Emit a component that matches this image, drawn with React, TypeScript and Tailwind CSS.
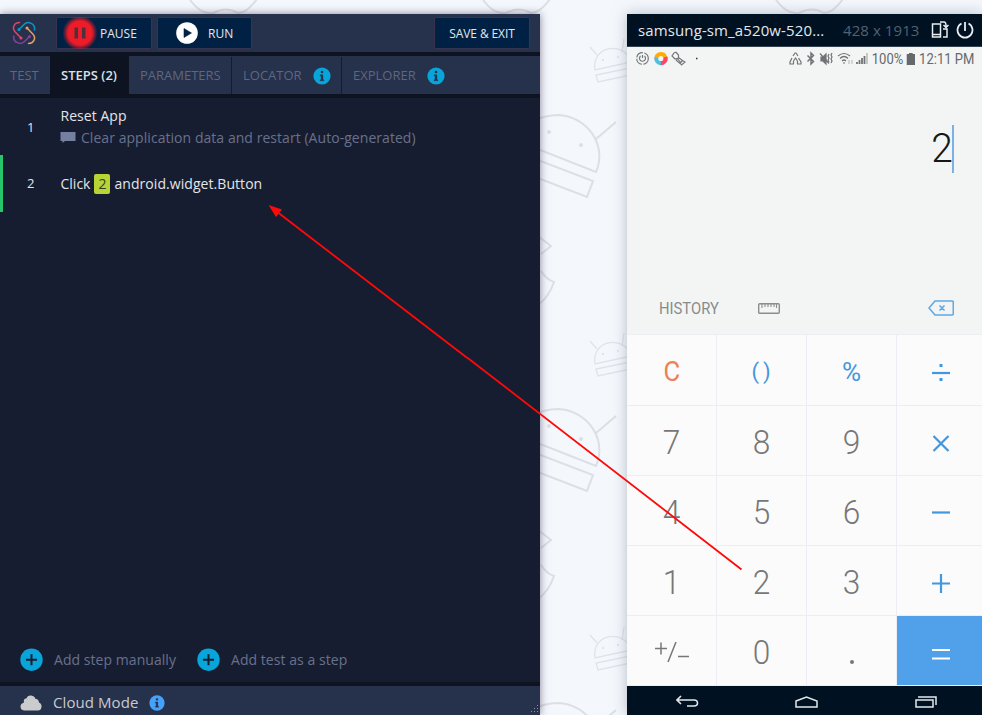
import type { ReactNode } from "react";

function Backdrop() {
  return (
    <svg className="absolute inset-0" width="982" height="715" fill="none" stroke="#dcdfe3" strokeWidth="2">
      <defs>
        <g id="robots">
          <path d="M530 122Q545 115 558 115C586 116 608 144 596 172L530 146M530 157L593 181L587 197L530 175M596 139L616 122" />
          <circle cx="549" cy="132" r="1" />
          <circle cx="581" cy="145" r="1" />
          <path d="M530 230L551 246L541 254M541 271Q547 280 554 282Q549 297 538 305" />
          <g strokeWidth="1.3" stroke="#e0e3e9">
            <path d="M640 60L595 70C591 46 623 41 630 60M640 66L596 75L598 82L640 73M590 47L597 55M622 52L624 39" />
            <circle cx="603" cy="60" r=".5" />
            <circle cx="618" cy="57" r=".5" />
          </g>
        </g>
        <path id="curve" d="M190 0Q201 15 213 13Q226 6 238 13Q247 13 257 -1" />
      </defs>
      <use href="#robots" />
      <use href="#robots" y="294" />
      <use href="#robots" y="588" />
      <use href="#curve" />
      <use href="#curve" x="293" />
      <use href="#curve" x="586" />
    </svg>
  );
}

function Info({ className }: { className: string }) {
  return (
    <svg viewBox="0 0 18 18" className={className}>
      <circle cx="9" cy="9" r="8.6" fill="currentColor" />
      <path d="M7 7.8h3v5h1v1H7v-1h1V9H7zM8 4h2v2H8z" fill="#26314b" stroke="#26314b" strokeWidth=".3" />
    </svg>
  );
}

function Plus() {
  return (
    <svg viewBox="0 0 24 24" className="size-6 shrink-0">
      <circle cx="11.500" cy="11.700" r="11.200" fill="#07a5da" />
      <path d="M11.500 6.200v11M6 11.700h11" stroke="#171d30" strokeWidth="2" />
    </svg>
  );
}

function Logo() {
  return (
    <svg viewBox="0 0 24 24" className="ml-[12px] size-6 shrink-0" fill="none" strokeWidth="1.5" strokeLinecap="round">
      <path d="M9 17L3 10.800C-.2 7 2 1.500 7.500 1.500" stroke="#e6436c" />
      <path d="M7 8.500L12 3.500C16-.5 23.500 2.500 22.500 9" stroke="#0997cb" />
      <path d="M15 7L21 13.200C24.500 17.200 21.500 22.500 16.500 22.500" stroke="#e0a067" />
      <path d="M17.500 15.500L12.500 20.500C8.500 24.500.8 21.500 1.800 15" stroke="#84409d" />
      <circle cx="9" cy="17" r=".8" stroke="#e6436c" />
      <circle cx="7" cy="8.500" r=".8" stroke="#0997cb" />
      <circle cx="15" cy="7" r=".8" stroke="#e0a067" />
      <circle cx="17.500" cy="15.500" r=".8" stroke="#84409d" />
    </svg>
  );
}

function Toolbar() {
  const button = "flex h-8 shrink-0 items-center rounded-[2px] border border-[#38344f] bg-[#002143] text-[12px] text-[#e3e7ed]";
  return (
    <header className="flex h-[42px] items-center border-b-4 border-[#0d1321] bg-[#26314b]">
      <Logo />
      <button className={button + " ml-[20px] w-[96px]"}>
        <svg viewBox="0 0 36 32" className="ml-[5px] h-8 w-9 shrink-0">
          <defs>
            <radialGradient id="pauseGlow">
              <stop offset="0.68" stopColor="#ee1b28" />
              <stop offset="1" stopColor="#ee1b28" stopOpacity="0" />
            </radialGradient>
          </defs>
          <circle cx="18" cy="16" r="17.500" fill="url(#pauseGlow)" />
          <path d="M12.500 10.500h3.500v11h-3.500zm7.500 0h3.500v11H20z" fill="#503039" />
        </svg>
        <span className="ml-[2px] pt-px">PAUSE</span>
      </button>
      <button className={button + " ml-[5px] w-[95px]"}>
        <svg viewBox="0 0 22 22" className="ml-[18px] size-[22px] shrink-0">
          <circle cx="11" cy="11" r="10.800" fill="white" />
          <path d="M8 6.500L15.500 11L8 15.500z" fill="#002143" stroke="#002143" strokeWidth=".6" />
        </svg>
        <span className="ml-[10px] pt-px">RUN</span>
      </button>
      <button className={button + " ml-auto mr-[10px] w-[96px] justify-center pt-px tracking-[-0.1px]"}>SAVE &amp; EXIT</button>
    </header>
  );
}

function Tabs() {
  return (
    <nav className="flex h-[42px] items-stretch border-b-4 border-[#0d1321] bg-[#26314b] pt-px text-[13px] text-[#5e6780]">
      <span className="flex w-[50px] items-center pl-[10px]">TEST</span>
      <span className="-mt-px flex w-[79px] items-center bg-[#0d1321] pl-[11px] pt-px font-semibold text-[#dce0e6]">STEPS&nbsp;(2)</span>
      <span className="flex w-[103px] items-center border-r border-[#141b2c] pl-[11px]">PARAMETERS</span>
      <span className="flex w-[110px] items-center border-r border-[#141b2c] pl-[11px]">
        LOCATOR <Info className="ml-[11px] size-[18px] text-[#07a5da]" />
      </span>
      <span className="flex items-center pl-[11px]">
        EXPLORER <Info className="ml-[11px] size-[18px] text-[#07a5da]" />
      </span>
    </nav>
  );
}

function Recorder() {
  return (
    <section className="mt-[14px] flex h-[701px] w-[540px] shrink-0 flex-col whitespace-nowrap bg-[#171d30] font-['Open_Sans',sans-serif] shadow-[0_0_8px_#493960a0]">
      <Toolbar />
      <Tabs />
      <main className="flex min-h-0 flex-1 flex-col text-[14px] text-[#e3e5e9]">
        <div className="flex h-[57px] items-center">
          <span className="w-[60px] pl-[27px] pt-[2px] text-[13px]">1</span>
          <div>
            <div className="h-[22px] pl-[0.5px] leading-[22px] tracking-[0.05px]">Reset App</div>
            <div className="flex h-[21px] items-center tracking-[0.05px] text-[#68718c]">
              <svg viewBox="0 0 16 12" className="mr-[5px] h-3 w-4">
                <path d="M.5 0h15v9H5l-2.500 2V9h-2z" fill="#7580a0" />
              </svg>
              Clear application data and restart (Auto-generated)
            </div>
          </div>
        </div>
        <div className="flex h-[57px] items-center border-l-[3px] border-[#25c66c]">
          <span className="w-[57.5px] pl-[24px] text-[13px]">2</span>
          <span>Click</span>
          <span className="mx-[4px] flex h-[20px] w-[16px] items-center justify-center rounded-[2px] bg-[#b7d434] text-[#343d29]">2</span>
          <span className="tracking-[0.06px]">android.widget.Button</span>
        </div>
        <div className="mt-auto flex h-[45px] items-center pl-[20px] tracking-[0.05px] text-[#68718c]">
          <Plus />
          <span className="ml-[10px] w-[143px]">Add step manually</span>
          <Plus />
          <span className="ml-[10px]">Add test as a step</span>
        </div>
      </main>
      <footer className="flex h-[33px] shrink-0 items-center border-t-4 border-[#0d1321] bg-[#26314b] pt-[4px] text-[15px] text-[#c8cbd1]">
        <svg viewBox="0 0 22 16" className="ml-[20px] h-4 w-[22px]" fill="#cacbcc">
          <path d="M4 15.500Q.5 15 .5 11.500Q.5 8.500 4 7.500Q3 3.500 6.500 3.200Q7.500 0 11 .5Q15 1 15.500 4Q18.500 3.500 19 7.500Q22 9 21.500 12Q21 15.500 18 15.500z" />
        </svg>
        <span className="ml-[11px] tracking-[0.08px]">Cloud Mode</span>
        <Info className="ml-[11px] size-4 text-[#46a1fb]" />
        <svg viewBox="0 0 8 8" className="ml-auto mr-[1px] mt-[13px] size-2" fill="#8c91a0">
          <path d="M6 0h1v1H6zM6 3h1v1H6zM3 3h1v1H3zM0 6h1v1H0zM3 6h1v1H3zM6 6h1v1H6z" />
        </svg>
      </footer>
    </section>
  );
}

function StatusBar() {
  return (
    <div className="flex h-[24px] items-center text-[#65696b]">
      <svg viewBox="0 0 66 18" className="ml-[8px] h-[18px] w-[66px] shrink-0" fill="none" stroke="#737779" strokeWidth="1.200">
        <circle cx="7.500" cy="8.500" r="5.800" strokeDasharray="8 1.500" />
        <path d="M5.500 6a3 3 0 1 0 4 0M7.500 5v3" />
        <g fill="none" strokeWidth="4">
          <path d="M21.300 8A4.700 4.700 0 0 1 28.500 4.700" stroke="#ffad08" />
          <path d="M28 4.300A4.700 4.700 0 0 1 29.500 11" stroke="#ffad08" />
          <path d="M30.500 7A4.700 4.700 0 0 1 25 13" stroke="#f84a68" />
          <path d="M21.300 7.500A4.700 4.700 0 0 0 26 13.200" stroke="#54bddb" />
        </g>
        <path d="M39 3l2-.7L43.500 5v3L40 9l-3-3zM43.500 7.500l4 3-2.500 3-4-3.500M47.500 10.500l2.500 1.500-3.500 3-1.500-2M42 8l4 5" />
        <path d="M61 8.500h1.500" stroke="#333" strokeWidth="1.500" />
      </svg>
      <svg viewBox="0 0 80 18" className="ml-[88px] h-[18px] w-[80px] shrink-0" fill="none" stroke="#707476" strokeWidth="1.200">
        <path d="M4 6l2-3h1l2 3M3 8l-2 4v2h4M9.500 8l2.500 4v2H8M4.500 11L6.500 8l2 3M4.500 14v-3M8.500 14v-3" />
        <path d="M18.500 5.500l6 6-2.500 2.500v-11l2.500 2.500-6 6" strokeWidth="1.500" />
        <path d="M32 7h2l3-3v10l-3-3h-2z" fill="#707476" />
        <path d="M31 3.500l9 10M40 4l-1 2 1 2-1 2 1 2M43 3l-1 2 1 2-1 2 1 2-1 2" />
        <path d="M49 6q6-5 12 0M51 8.500q4-4 8 0M53 11q2-2 4 0M54 13h2" />
        <path d="M60 10v4M63 10v4" strokeWidth=".8" stroke="#a0a4a5" />
        <path d="M68 14v-2M70.500 14v-4M73 14V8M75.500 14V6" strokeWidth="1.800" />
        <path d="M78 14V3" stroke="#c0c3c4" strokeWidth="1.800" />
      </svg>
      <div className="flex w-[110px] origin-left scale-x-[0.93] items-center font-[Roboto,sans-serif] text-[14px]">
        <span className="ml-[3px]">100%</span>
        <svg viewBox="0 0 10 14" className="ml-[3px] mr-[4px] h-[14px] w-[10px] shrink-0" fill="#65696b">
          <path d="M3 1h4v1h2.500v11H.5V2H3z" />
        </svg>
        <span>12:11&nbsp;PM</span>
      </div>
    </div>
  );
}

function Display() {
  return (
    <div className="flex h-[288px] flex-col border-b border-[#eceef1] bg-[#f3f5f5]">
      <StatusBar />
      <div className="mr-[29px] mt-[54px] flex h-[48px] items-center justify-end border-r-2 border-[#7bb2e5] font-[Roboto,sans-serif] text-[41px] font-light text-[#171717]">
        <span className="-mr-[1px] origin-right scale-x-[0.95]">2</span>
      </div>
      <div className="mt-[120px] flex h-[30px] items-center">
        <span className="ml-[32px] mt-[1px] w-[99px] origin-left scale-x-[0.87] font-[Roboto,sans-serif] text-[17px] text-[#888b8b]">HISTORY</span>
        <svg viewBox="0 0 22 11" className="h-[11px] w-[22px]" fill="none" stroke="#8b8e8e" strokeWidth="1.400">
          <rect x=".7" y=".7" width="20.600" height="9.600" rx="1" />
          <path d="M4 1v4M7 1v3M10 1v3M13 1v3M16 1v3M18.500 1v4" strokeWidth="1.100" />
        </svg>
        <svg viewBox="0 0 26 16" className="ml-auto mr-[29px] h-4 w-[26px]" fill="none" stroke="#5fa9e4" strokeWidth="1.600">
          <path d="M7 1h17q1.300 0 1.300 1.300v11.400Q25.300 15 24 15H7L1 8zM11.500 5.500l5 5m0-5l-5 5" />
        </svg>
      </div>
    </div>
  );
}

function Key({ children, className = "text-[#777]" }: { children: ReactNode; className?: string }) {
  return (
    <div className={"flex items-center justify-center border-b border-r border-[#eceef3] font-[Roboto,sans-serif] " + className}>
      {children}
    </div>
  );
}

function Operator({ d, dots = false }: { d: string; dots?: boolean }) {
  return (
    <svg viewBox="0 0 20 20" className="ml-[2px] mt-[4px] size-5" fill="none" stroke="currentColor" strokeWidth="2.200">
      <path d={d} />
      {dots && <path d="M8.500 2h3v3h-3zM8.500 16h3v3h-3z" fill="currentColor" stroke="none" />}
    </svg>
  );
}

function Digit({ value }: { value: string }) {
  return (
    <Key>
      <span className="mt-[4px] scale-x-[0.93] text-[34px] font-light">{value}</span>
    </Key>
  );
}

function Keypad() {
  return (
    <div className="grid h-[351px] grid-cols-[90px_90px_90px_86px] grid-rows-[71px_70px_70px_70px_70px] bg-[#fbfbfb]">
      <Key className="text-[#ee8058]">
        <span className="mt-[5px] scale-x-[0.95] text-[27px]">C</span>
      </Key>
      <Key className="text-[#4397de]">
        <span className="ml-[3px] mt-[3px] text-[22px] tracking-[4px]">()</span>
      </Key>
      <Key className="text-[#4397de]">
        <span className="mt-[5px] text-[26px]">%</span>
      </Key>
      <Key className="text-[#4397de]">
        <Operator d="M1 11h18" dots />
      </Key>
      <Digit value="7" />
      <Digit value="8" />
      <Digit value="9" />
      <Key className="text-[#4397de]">
        <Operator d="M2.500 3L17.500 18M17.500 3L2.500 18" />
      </Key>
      <Digit value="4" />
      <Digit value="5" />
      <Digit value="6" />
      <Key className="text-[#4397de]">
        <Operator d="M1 9.500h18" />
      </Key>
      <Digit value="1" />
      <Digit value="2" />
      <Digit value="3" />
      <Key className="text-[#4397de]">
        <Operator d="M1 10.500h18M10 1v19" />
      </Key>
      <Key>
        <svg viewBox="0 0 36 24" className="mt-[3px] h-6 w-9" fill="none" stroke="#777" strokeWidth="1.500">
          <path d="M1 8.500h12M7 2.500v12M22 2L14 22M24 16.500h11" />
        </svg>
      </Key>
      <Digit value="0" />
      <Key>
        <svg viewBox="0 0 6 6" className="mt-[23px] size-[6px]" fill="#777">
          <circle cx="3" cy="3" r="2" />
        </svg>
      </Key>
      <Key className="bg-[#50a1e9] text-white">
        <Operator d="M1 7h18M1 15.500h18" />
      </Key>
    </div>
  );
}

function Phone() {
  return (
    <section className="ml-[87px] mt-[14px] flex h-[701px] w-[356px] shrink-0 flex-col whitespace-nowrap bg-[#001122] shadow-[0_0_13px_#77809180]">
      <header className="flex h-[33px] items-center border-b border-[#34414f] font-['Open_Sans',sans-serif] text-[15px]">
        <span className="ml-[11px] w-[205px] tracking-[0.12px] text-[#e4e8ec]">samsung-sm_a520w-520...</span>
        <span className="w-[88px] tracking-[0.08px] text-[#526171]">428 x 1913</span>
        <svg viewBox="0 0 18 18" className="size-[18px]" fill="none" stroke="#e8edf1" strokeWidth="1.500">
          <path d="M1.500 3h8v13h-8zM1.500 13.500h8M12 8h4v8h-4M9 1h4q2 0 2 4M12.500 4l2.500 2.500L17.500 4" />
        </svg>
        <svg viewBox="0 0 18 18" className="ml-[7px] size-[18px]" fill="none" stroke="#e8edf1" strokeWidth="1.800">
          <path d="M5.500 2.500a7.500 7.500 0 1 0 7 0M9 1v9" />
        </svg>
      </header>
      <Display />
      <Keypad />
      <nav className="flex h-[29px] items-center pt-[2px]">
        <svg viewBox="0 0 23 14" className="ml-[49px] h-[14px] w-[23px]" fill="none" stroke="#e3e7ea" strokeWidth="1.600">
          <path d="M5 1L1 5l4 4M1 5h17q3.500 0 3.500 3T18 11h-7" />
        </svg>
        <svg viewBox="0 0 23 12" className="ml-[96px] h-3 w-[23px]" fill="none" stroke="#e3e7ea" strokeWidth="1.500">
          <path d="M1 5L11.500 1L22 5v6H1z" />
        </svg>
        <svg viewBox="0 0 22 12" className="ml-[97px] h-3 w-[22px]" fill="none" stroke="#e3e7ea" strokeWidth="1.500">
          <path d="M1 4h17v7H1zM3 1h18v8" />
        </svg>
      </nav>
    </section>
  );
}

export default function App() {
  return (
    <div className="relative flex h-[715px] w-[982px] overflow-hidden bg-[#f4f8fd]">
      <Backdrop />
      <div className="relative flex">
        <Recorder />
        <Phone />
      </div>
      <svg className="pointer-events-none absolute inset-0" width="982" height="715">
        <path d="M741.500 569.500L469 359L466 357L276 211" fill="none" stroke="#ff0909" strokeWidth="1.800" />
        <path d="M268.500 205L282 209.500L276 217z" fill="#ff0909" />
      </svg>
    </div>
  );
}
